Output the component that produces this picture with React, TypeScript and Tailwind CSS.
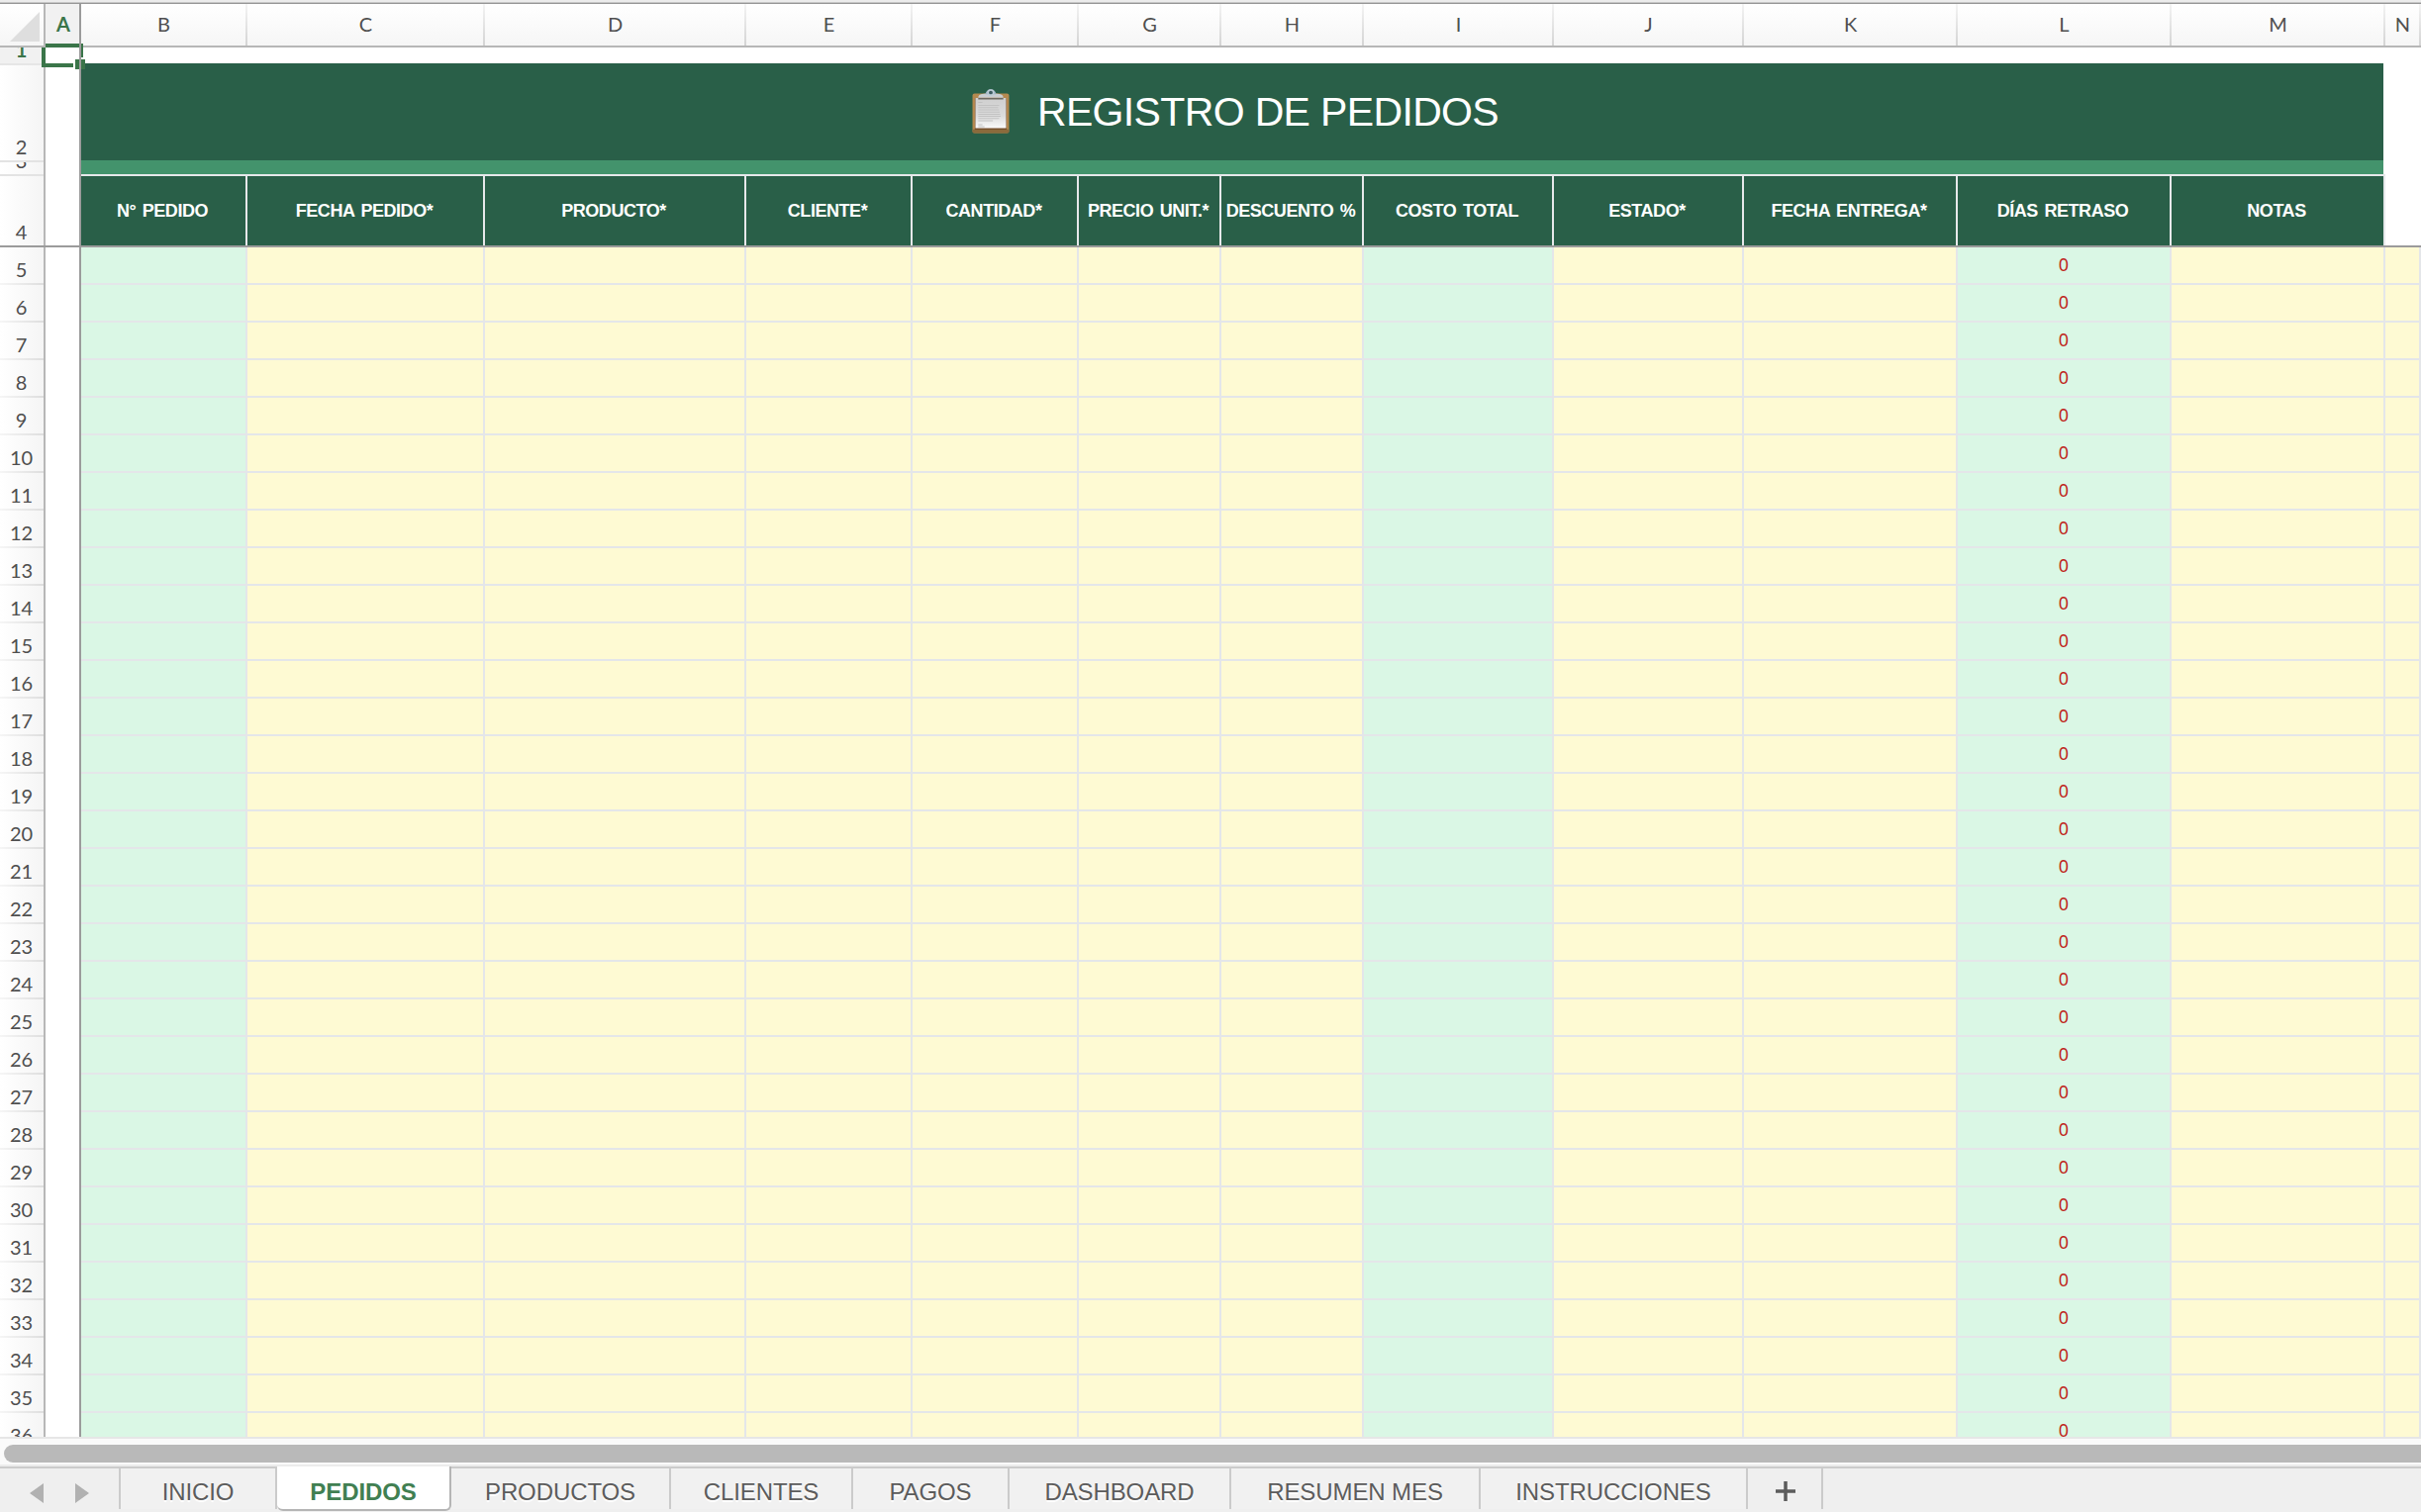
import React from 'react';

type Column = { id: string; width: string; title: string; green?: boolean };

const columns: Column[] = [
  { id: 'B', width: 'w-[168px]', title: 'N° PEDIDO', green: true },
  { id: 'C', width: 'w-[240px]', title: 'FECHA PEDIDO*' },
  { id: 'D', width: 'w-[264px]', title: 'PRODUCTO*' },
  { id: 'E', width: 'w-[168px]', title: 'CLIENTE*' },
  { id: 'F', width: 'w-[168px]', title: 'CANTIDAD*' },
  { id: 'G', width: 'w-[144px]', title: 'PRECIO UNIT.*' },
  { id: 'H', width: 'w-[144px]', title: 'DESCUENTO %' },
  { id: 'I', width: 'w-[192px]', title: 'COSTO TOTAL', green: true },
  { id: 'J', width: 'w-[192px]', title: 'ESTADO*' },
  { id: 'K', width: 'w-[216px]', title: 'FECHA ENTREGA*' },
  { id: 'L', width: 'w-[216px]', title: 'DÍAS RETRASO', green: true },
  { id: 'M', width: 'w-[216px]', title: 'NOTAS' },
];

const bodyColumns: Column[] = [...columns, { id: 'N', width: 'w-[36px]', title: '' }];
const rows = Array.from({ length: 32 }, (_, i) => i + 5);

const tabs = [
  { name: 'INICIO', width: 'w-[158px]' },
  { name: 'PEDIDOS', width: 'w-[176px]', active: true },
  { name: 'PRODUCTOS', width: 'w-[222px]' },
  { name: 'CLIENTES', width: 'w-[184px]' },
  { name: 'PAGOS', width: 'w-[158px]' },
  { name: 'DASHBOARD', width: 'w-[224px]' },
  { name: 'RESUMEN MES', width: 'w-[252px]' },
  { name: 'INSTRUCCIONES', width: 'w-[270px]' },
];

const rowHead =
  'w-[46px] shrink-0 border-r-2 border-r-[#b7b7b7] bg-linear-to-r from-white to-[#f5f5f5] overflow-hidden';

function RowNumber({ children, active }: { children: React.ReactNode; active?: boolean }) {
  return (
    <span
      className={`block w-[43px] text-center text-[20px] leading-[24px] ${
        active ? 'font-bold text-[#3a7549]' : 'text-[#4f4f4f]'
      }`}
    >
      {children}
    </span>
  );
}

function Clipboard() {
  return (
    <svg width="38" height="46" viewBox="0 0 36 46" preserveAspectRatio="none" className="shrink-0">
      <defs>
        <linearGradient id="paper" x1="0" y1="0" x2="0" y2="1">
          <stop offset="0" stopColor="#cfcfcf" />
          <stop offset="0.6" stopColor="#dcdcdc" />
          <stop offset="1" stopColor="#fafafa" />
        </linearGradient>
      </defs>
      <rect x="0.500" y="4.500" width="35" height="40" rx="2" fill="#b5894f" />
      <rect x="0.500" y="40.500" width="35" height="4" rx="1.500" fill="#8b6a3c" />
      <rect x="2.800" y="9" width="30.400" height="32" fill="#76502d" />
      <rect x="3.300" y="9" width="29.400" height="30.500" fill="url(#paper)" />
      <path d="M6 9.700h24" stroke="#6f6a62" strokeWidth="1.600" />
      <path
        d="M6 13.500h4M6 16.500h20M6 18.700h19M6 21h20M6 23.200h20.500M6 25.400h21M6 27.600h21.500M6 29.800h20M6 32h14M6 36h4M6 38h6"
        stroke="#c2c2c2"
        strokeWidth="1"
      />
      <path d="M6 8.800c0-3 2-3.800 7-4.300h10c5 .5 7 1.300 7 4.300z" fill="#c9cdd2" />
      <path d="M13 5.200a5 5 0 0 1 10 0z" fill="#9fb4c4" />
      <circle cx="18" cy="3.500" r="2.600" fill="#3f5c62" stroke="#bccbd6" strokeWidth="1.500" />
    </svg>
  );
}

export default function App() {
  return (
    <div className="flex h-[1528px] w-[2446px] flex-col overflow-hidden bg-white font-[Lato,'Noto_Sans',sans-serif]">
      <div className="flex h-[4px] shrink-0 flex-col justify-end bg-[#ececec]">
        <div className="h-px bg-[#c6c6c6]" />
        <div className="h-px bg-[#969696]" />
      </div>

      {/* Column letters */}
      <div className="flex h-[44px] shrink-0 border-b-2 border-b-[#b7b7b7] bg-linear-to-b from-white to-[#f6f6f6] text-[20px] text-[#4f4f4f]">
        <div className="flex w-[46px] shrink-0 items-start border-r-2 border-r-[#b7b7b7] pt-2 pl-[10px]">
          <svg width="30" height="30" viewBox="0 0 30 30">
            <path d="M30 0v30H0z" fill="#dedede" />
          </svg>
        </div>
        <div className="flex w-[36px] shrink-0 items-center justify-center border-r-2 border-r-[#9b9b9b] bg-[#f1f1f1] pb-[2px] pl-[2px] font-bold text-[#3a7549]">
          A
        </div>
        {bodyColumns.map((c) => (
          <div key={c.id} className={`${c.width} flex shrink-0`}>
            <span className="flex flex-1 items-center justify-center pb-[2px] pl-px">{c.id}</span>
            <span className="w-[2px] bg-linear-to-b from-[#f4f4f4] to-[#d4d4d4]" />
          </div>
        ))}
      </div>

      {/* Frozen rows */}
      <div className="relative flex h-[202px] shrink-0 border-b-2 border-b-[#9b9b9b]">
        <div className={rowHead}>
          <div className="flex h-[18px] items-end overflow-hidden border-b-2 border-[#e6e6e6] bg-[#f1f1f1] pb-[2px]">
            <RowNumber active>1</RowNumber>
          </div>
          <div className="flex h-[98px] items-end overflow-hidden border-b-2 border-[#e3e3e3] pb-[2px]">
            <RowNumber>2</RowNumber>
          </div>
          <div className="flex h-[14px] items-end overflow-hidden border-b-2 border-[#e3e3e3] pb-[2px]">
            <RowNumber>3</RowNumber>
          </div>
          <div className="flex h-[70px] items-end overflow-hidden pb-[2px]">
            <RowNumber>4</RowNumber>
          </div>
        </div>
        <div className="w-[36px] shrink-0 border-r-2 border-r-[#9b9b9b]" />
        <div className="flex w-[2328px] shrink-0 flex-col pt-4">
          <div className="flex h-[98px] w-[2326px] items-center justify-center bg-[#295f48] pl-[6px]">
            <Clipboard />
            <span className="ml-[28px] whitespace-pre pt-px font-['Liberation_Sans',Arial,sans-serif] text-[41px] leading-none tracking-[-0.65px] text-white">
              REGISTRO DE PEDIDOS
            </span>
          </div>
          <div className="h-[14px] w-[2326px] bg-[#43936c]" />
          <div className="flex h-[72px] border-t-2 border-[#e6e8ea] bg-[#295f48]">
            {columns.map((c) => (
              <div
                key={c.id}
                className={`${c.width} flex shrink-0 items-center justify-center whitespace-nowrap border-r-2 border-[#e6e8ea] pt-px pr-[2px] font-['Liberation_Sans',Arial,sans-serif] text-[18px] font-bold tracking-[-0.45px] text-white [word-spacing:2px]`}
              >
                {c.title}
              </div>
            ))}
          </div>
        </div>

        {/* Selection frame around A1 */}
        <div className="absolute top-[-4px] left-[46px] h-[4px] w-[36px] bg-[#3a7549]" />
        <div className="absolute top-0 left-[42px] h-[20px] w-[4px] bg-[#3a7549]" />
        <div className="absolute top-[16px] left-[42px] h-[4px] w-[32px] bg-[#3a7549]" />
        <div className="absolute top-[-4px] left-[82px] h-[14px] w-[2px] bg-[#3a7549]" />
        <div className="absolute top-[12px] left-[76px] h-[10px] w-[10px] bg-[#3a7549]" />
        <div className="absolute top-[-4px] left-[80px] h-[26px] w-[2px] bg-[#9b9b9b]" />
      </div>

      {/* Scrollable rows */}
      <div className="h-[1202px] shrink-0 overflow-hidden">
        {rows.map((n) => (
          <div key={n} className="flex h-[38px]">
            <div className={`${rowHead} flex flex-col`}>
              <div className="flex flex-1 items-end pb-[2px]">
                <RowNumber>{n}</RowNumber>
              </div>
              <div className="h-[2px] bg-linear-to-r from-[#f6f6f6] to-[#dedede]" />
            </div>
            <div className="w-[36px] shrink-0 border-r-2 border-r-[#9b9b9b]" />
            {bodyColumns.map((c) => (
              <div
                key={c.id}
                className={`${c.width} flex shrink-0 items-center justify-center border-r-2 border-b-2 border-[#e4e6e9] pb-[2px] font-['Noto_Sans',sans-serif] text-[18px] leading-none text-[#c0281c] ${
                  c.green ? 'bg-[#daf7e5]' : 'bg-[#fefad3]'
                }`}
              >
                {c.id === 'L' ? '0' : ''}
              </div>
            ))}
          </div>
        ))}
      </div>

      {/* Horizontal scrollbar */}
      <div className="h-[30px] shrink-0 border-t-2 border-b-2 border-t-[#e6e6e6] border-b-[#ececec] bg-[#fafafa] pt-[6px] pl-1">
        <div className="h-[18px] rounded-l-full bg-[#b9b9b9]" />
      </div>

      {/* Sheet tabs */}
      <div className="flex h-[46px] shrink-0 border-t-2 border-[#cbcbcb] bg-[#efefef] font-['Liberation_Sans',Helvetica,sans-serif] text-[24px] text-[#5c5c5c]">
        <div className="flex h-[41px] w-[122px] shrink-0 border-r-2 border-[#cbcbcb] pt-[14px] pl-[30px]">
          <svg width="60" height="22" viewBox="0 0 60 22" fill="#b1b1b1">
            <path d="M14 1v20L0 11zM46 1v20l14-10z" />
          </svg>
        </div>
        {tabs.map((t) =>
          t.active ? (
            <div
              key={t.name}
              className={`${t.width} -mt-[2px] flex h-[45px] shrink-0 items-center justify-center rounded-b-md border-r-2 border-b-2 border-[#b5b5b5] bg-white pt-[8px] font-bold tracking-[-0.1px] text-[#417f52]`}
            >
              {t.name}
            </div>
          ) : (
            <div
              key={t.name}
              className={`${t.width} flex h-[41px] shrink-0 items-center justify-center border-r-2 border-[#cbcbcb] bg-[#f1f1f1] pt-[6px] tracking-[-0.1px] [text-shadow:0_2px_1px_#fff]`}
            >
              {t.name}
            </div>
          ),
        )}
        <div className="flex h-[41px] w-[76px] shrink-0 justify-center border-r-2 border-[#cbcbcb] pt-[13px] pl-[2px]">
          <svg width="20" height="20" viewBox="0 0 20 20">
            <path d="M10 0v20M0 10h20" stroke="#5c5c5c" strokeWidth="3.500" />
          </svg>
        </div>
      </div>
    </div>
  );
}
